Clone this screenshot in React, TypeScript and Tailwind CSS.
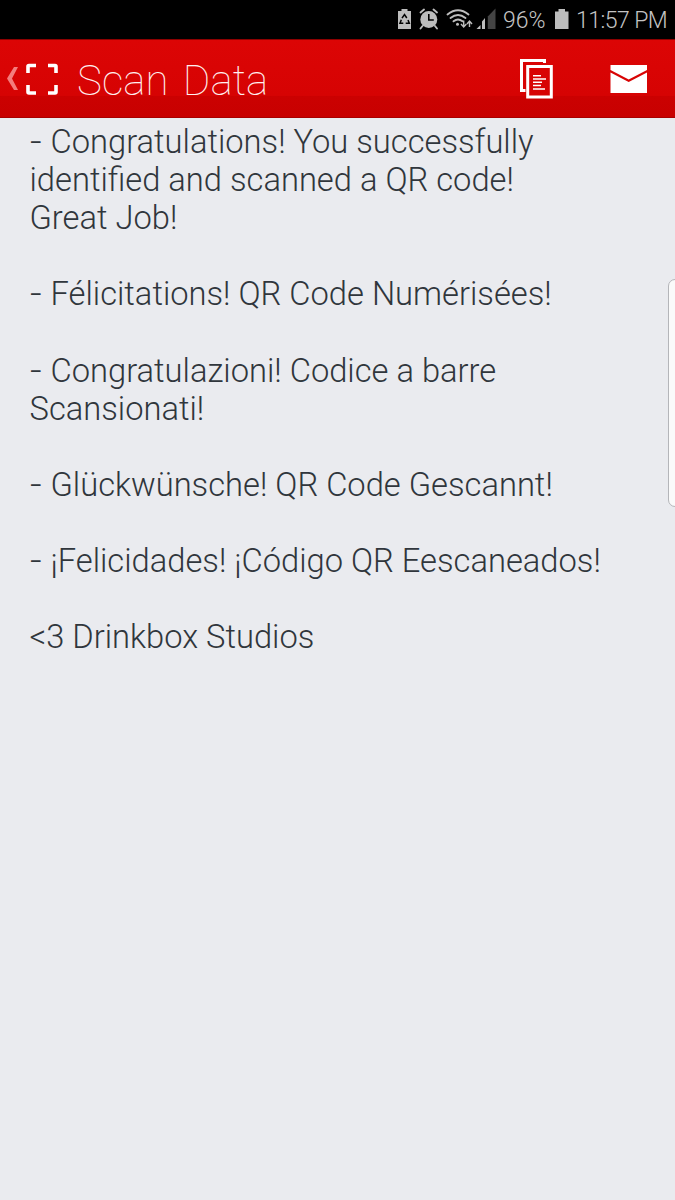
const lines = [
  { bullet: true, text: 'Congratulations! You successfully' },
  { bullet: false, text: 'identified and scanned a QR code!' },
  { bullet: false, text: 'Great Job!' },
  { bullet: false, text: '' },
  { bullet: true, text: 'Félicitations! QR Code Numérisées!' },
  { bullet: false, text: '' },
  { bullet: true, text: 'Congratulazioni! Codice a barre' },
  { bullet: false, text: 'Scansionati!' },
  { bullet: false, text: '' },
  { bullet: true, text: 'Glückwünsche! QR Code Gescannt!' },
  { bullet: false, text: '' },
  { bullet: true, text: '¡Felicidades! ¡Código QR Eescaneados!' },
  { bullet: false, text: '' },
  { bullet: false, text: '<3 Drinkbox Studios' },
];

function StatusIcons() {
  return (
    <svg width="99" height="39" viewBox="397 0 99 39" className="shrink-0" fill="#bdbdbd">
      <path d="M398 11h3.500v-2h6v2h3.500v18h-13z" />
      <path d="M402 18.200l2.500-3.700 2.300 3.500M408 20l1.300 3.300h-3.600M403.300 23.300h-3.300l1.300-3.500" stroke="#000" strokeWidth="1.500" fill="none" />
      <circle cx="428.800" cy="19.500" r="8.500" />
      <path d="M428.800 14v6h5" stroke="#000" strokeWidth="1.600" fill="none" />
      <path d="M420.500 12.500l3.500-3M437 12.500l-3.500-3M422.500 26l-2 2.500M435 26l2 2.500" stroke="#bdbdbd" strokeWidth="1.900" fill="none" strokeLinecap="round" />
      <g stroke="#bdbdbd" strokeWidth="1.900" fill="none" strokeLinecap="round">
        <path d="M447.500 14.500q10.500-8.500 21 0M450.500 18q7.500-6 15 0M453.500 21.300q4.500-3.500 9 0" />
      </g>
      <circle cx="457.500" cy="24.200" r="1.500" />
      <path d="M463.700 20.500v6M461 24l2.700 3 2.700-3M469.500 27v-6M467 24l2.500-3 2.500 3" stroke="#bdbdbd" strokeWidth="1.400" fill="none" />
      <path d="M476.500 29l4-4v4zM482 29v-7.500l3-3.500v11z" />
      <path d="M487.800 29V16.500l7.700-8V29z" fill="#444" />
    </svg>
  );
}

export default function App() {
  return (
    <div className="flex h-[1200px] w-[675px] flex-col overflow-hidden bg-[#eaebef] font-['Roboto','Liberation_Sans',sans-serif]">
      <div className="flex h-[39px] shrink-0 items-center bg-black pl-[397px] text-[23px] leading-[37px] font-light text-[#c4c4c4]">
        <StatusIcons />
        <span className="ml-[7px] w-[44px] shrink-0 pt-[2px] whitespace-nowrap">96%</span>
        <svg width="14" height="21" viewBox="0 0 14 21" className="ml-[8px] shrink-0" fill="#bdbdbd">
          <path d="M0 2.500h3.500V0h6.500v2.500h3.500V20H0z" />
        </svg>
        <span className="ml-[7px] shrink-0 pt-[2px] tracking-[-0.55px] whitespace-nowrap">11:57 PM</span>
      </div>
      <header className="flex h-[79px] shrink-0 items-center border-t border-b border-t-[#8d0000] border-b-[#a80000] bg-[linear-gradient(to_bottom,#dc0505_0%,#d60303_72%,#cb0101_73%,#c80000_100%)]">
        <svg width="60" height="77" viewBox="0 40 60 77" className="shrink-0">
          <path d="M14 67h4l-6 11.500 6 11.500h-4L7 78.500z" fill="#f47d7d" />
          <path d="M28 73v-6.500q0-1 1-1h7M48 65.500h7q1 0 1 1V73M56 85v7q0 1-1 1h-7M36 93h-7q-1 0-1-1v-7" fill="none" stroke="#fff" strokeWidth="3.600" />
        </svg>
        <h1 className="ml-[17px] w-[425px] pt-[5px] text-[42px] leading-none font-thin tracking-[0.1px] whitespace-nowrap text-[#fff0f0] [word-spacing:4px]">Scan Data</h1>
        <svg width="173" height="77" viewBox="502 40 173 77" className="shrink-0">
          <path d="M544.500 63v-2.500h-23v30h4" fill="none" stroke="#fff" strokeWidth="3" />
          <path d="M527.700 66.500h23.600v30.500h-23.600z" fill="none" stroke="#fff" strokeWidth="3" />
          <path d="M533 75.800h8M533 79h13M533 82.300h9M533 85.500h8M533 89h12" stroke="#fff" strokeWidth="1.500" />
          <path d="M610.500 65h36.500v5l-18.300 9.500-18.200-9.500z" fill="#fff" />
          <path d="M610.500 72.500l18.200 9.500 18.300-9.500v20.500h-36.500z" fill="#fff" />
        </svg>
      </header>
      <main className="relative grow pt-[5px] pl-[29.500px] text-[32.700px] leading-[38.100px] font-light text-[#30363c]">
        {lines.map((line, i) => (
          <p key={i} className="h-[38.100px] whitespace-pre">
            {line.bullet && (
              <span className="inline-block w-[21px]">
                <span className="inline-block origin-left scale-x-[1.25]">-</span>{' '}
              </span>
            )}
            {line.text}
          </p>
        ))}
        <div className="absolute top-[161px] right-[-8px] h-[228px] w-[15px] rounded-l-[7px] border border-[#b4b5b9] bg-[#fafafa]" />
      </main>
    </div>
  );
}
